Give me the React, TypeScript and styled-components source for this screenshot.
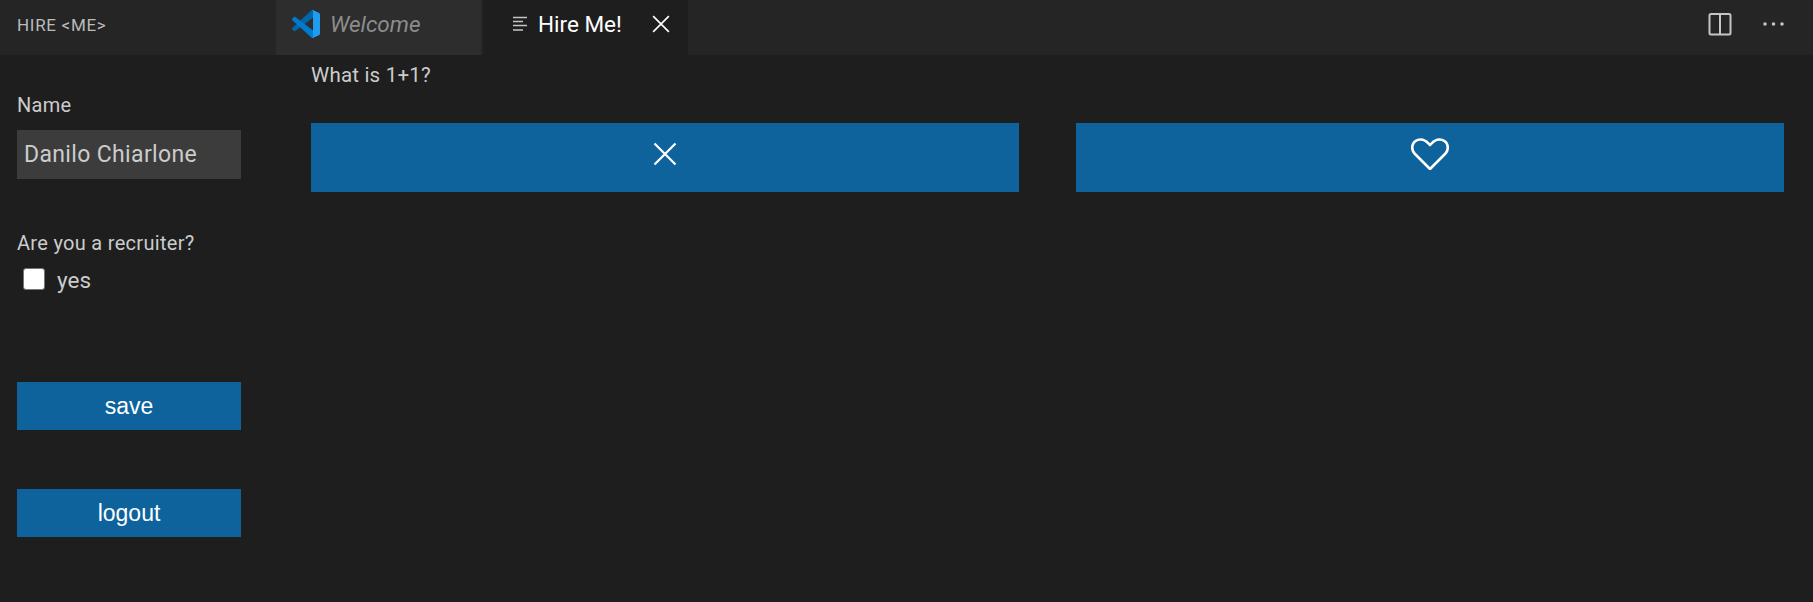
import React from "react";
import styled, { createGlobalStyle } from "styled-components";

const GlobalStyle = createGlobalStyle`
  html, body {
    margin: 0;
    padding: 0;
    background: #1e1e1e;
  }
  #root {
    height: 602px;
  }
`;

const uiFont = `Roboto, "Noto Sans", sans-serif`;

const Page = styled.div`
  display: flex;
  flex-direction: column;
  width: 1813px;
  height: 602px;
  overflow: hidden;
  background: #1e1e1e;
  color: #cccccc;
  font-family: ${uiFont};
`;

const TopBar = styled.div`
  display: flex;
  height: 55px;
  background: #252526;
`;

const PanelTitle = styled.div`
  width: 276px;
  padding: 15px 0 0 17px;
  box-sizing: border-box;
  font-size: 17px;
  line-height: 20px;
  letter-spacing: 0.7px;
  color: #bbbbbb;
`;

const Tab = styled.div<{ $active?: boolean }>`
  display: flex;
  align-items: center;
  width: 205px;
  height: 55px;
  box-sizing: border-box;
  padding-bottom: 8px;
  margin-right: 2px;
  background: ${(p) => (p.$active ? "#1e1e1e" : "#2d2d2d")};
`;

const WelcomeTab = styled(Tab)`
  padding-left: 16px;
`;

const HireTab = styled(Tab)`
  padding-left: 30px;
`;

const TabLabel = styled.span<{ $active?: boolean }>`
  font-size: 22.5px;
  line-height: 28px;
  font-style: ${(p) => (p.$active ? "normal" : "italic")};
  color: ${(p) => (p.$active ? "#ffffff" : "#8c8c8c")};
`;

const WelcomeLabel = styled(TabLabel)`
  margin-left: 10px;
`;

const HireLabel = styled(TabLabel)`
  margin-left: 10px;
`;

const TabClose = styled.span`
  display: flex;
  margin-left: 30px;
`;

const Actions = styled.div`
  display: flex;
  align-items: center;
  gap: 30px;
  margin-left: auto;
  padding: 0 29px 8px 0;
`;

const Body = styled.div`
  display: flex;
  flex: 1;
`;

const Sidebar = styled.form`
  display: flex;
  flex-direction: column;
  width: 311px;
  box-sizing: border-box;
  padding: 37px 0 0 17px;
`;

const FieldLabel = styled.label`
  font-size: 20px;
  line-height: 26px;
  letter-spacing: 0.3px;
  color: #cccccc;
`;

const NameInput = styled.input`
  width: 224px;
  height: 49px;
  box-sizing: border-box;
  margin-top: 12px;
  padding: 0 7px;
  border: 0;
  border-radius: 0;
  outline: 0;
  background: #3c3c3c;
  color: #cccccc;
  font-family: ${uiFont};
  font-size: 23px;
  letter-spacing: 0.35px;
`;

const RecruiterLabel = styled(FieldLabel)`
  margin-top: 51px;
`;

const CheckRow = styled.div`
  display: flex;
  align-items: center;
  margin: 9px 0 0 6px;
  height: 30px;
`;

const Check = styled.span`
  display: block;
  width: 20px;
  height: 20px;
  margin-bottom: 2px;
  border: 1px solid #767676;
  border-radius: 3px;
  background: #ffffff;
`;

const CheckText = styled.span`
  margin-left: 12px;
  font-size: 22.5px;
  color: #cccccc;
`;

const SideButton = styled.button`
  width: 224px;
  height: 48px;
  padding: 0;
  border: 0;
  border-radius: 0;
  background: #0e639c;
  color: #ffffff;
  font-family: "Liberation Sans", Arial, sans-serif;
  font-size: 23px;
`;

const SaveButton = styled(SideButton)`
  margin-top: 87px;
`;

const LogoutButton = styled(SideButton)`
  margin-top: 59px;
`;

const Main = styled.div`
  flex: 1;
  padding: 6px 29px 0 0;
`;

const Question = styled.div`
  font-size: 20.5px;
  line-height: 28px;
  letter-spacing: 0.2px;
  color: #cccccc;
`;

const Choices = styled.div`
  display: flex;
  gap: 57px;
  margin-top: 34px;
`;

const Choice = styled.button`
  display: flex;
  align-items: center;
  justify-content: center;
  width: 708px;
  height: 69px;
  padding: 0 0 7px;
  border: 0;
  border-radius: 0;
  background: #0e639c;
`;

const VsCodeLogo = () => (
  <svg width="28" height="28" viewBox="0 0 100 100">
    <path
      fill="#0065a9"
      d="M96.46 10.8 75.86.88C73.47-.27 70.62.21 68.75 2.08L1.3 63.58c-1.81 1.66-1.81 4.51 0 6.16l5.51 5.01c1.49 1.35 3.72 1.45 5.32.24L93.36 13.37C96.09 11.3 100 13.25 100 16.67v-.24c0-2.4-1.38-4.59-3.54-5.63Z"
    />
    <path
      fill="#007acc"
      d="M96.46 89.2 75.86 99.12c-2.39 1.15-5.24.67-7.11-1.2L1.3 36.42c-1.81-1.66-1.81-4.51 0-6.16l5.51-5.01c1.49-1.35 3.72-1.45 5.32-.24l81.23 61.62c2.73 2.07 6.64.12 6.64-3.3v.24c0 2.4-1.38 4.59-3.54 5.63Z"
    />
    <path
      fill="#1f9cf0"
      d="M75.86 99.13c-2.39 1.15-5.24.66-7.11-1.21 2.31 2.31 6.25.67 6.25-2.59V4.67c0-3.26-3.94-4.89-6.25-2.59 1.87-1.87 4.72-2.36 7.11-1.21l20.6 9.91C98.62 11.82 100 14.01 100 16.41v67.18c0 2.4-1.38 4.59-3.54 5.63Z"
    />
  </svg>
);

const PreviewIcon = () => (
  <svg width="15" height="16" viewBox="0 0 15 16" stroke="#c5c5c5" strokeWidth="1.6">
    <path d="M0 1.5h14M0 5.5h10M0 9.5h14M0 14h10" />
  </svg>
);

const CloseGlyph = ({ size }: { size: number }) => (
  <svg width={size} height={size} viewBox="0 0 24 24" stroke="#ffffff" strokeWidth="2.2">
    <path d="M1.5 1.5l21 21M22.5 1.5l-21 21" />
  </svg>
);

const HeartGlyph = () => (
  <svg
    width="38"
    height="32"
    viewBox="0 0 38 32"
    fill="none"
    stroke="#ffffff"
    strokeWidth="2.6"
    strokeLinejoin="round"
  >
    <path d="M19 31 3.5 15.5C0 11.5.8 5.5 4.5 3c4.5-3 10-1.5 14.5 4 4.5-5.5 10-7 14.5-4 3.7 2.5 4.5 8.5 1 12.5Z" />
  </svg>
);

const SplitIcon = () => (
  <svg width="24" height="24" viewBox="0 0 24 24" fill="none" stroke="#c5c5c5" strokeWidth="2">
    <rect x="1.5" y="2" width="21" height="20.5" rx="1.5" />
    <path d="M12 2v20.5" />
  </svg>
);

const MoreIcon = () => (
  <svg width="22" height="6" viewBox="0 0 22 6" fill="#c5c5c5">
    <circle cx="3" cy="3" r="1.8" />
    <circle cx="11.5" cy="3" r="1.8" />
    <circle cx="20" cy="3" r="1.8" />
  </svg>
);

export default function App() {
  return (
    <Page>
      <GlobalStyle />
      <TopBar>
        <PanelTitle>HIRE &lt;ME&gt;</PanelTitle>
        <WelcomeTab>
          <VsCodeLogo />
          <WelcomeLabel>Welcome</WelcomeLabel>
        </WelcomeTab>
        <HireTab $active>
          <PreviewIcon />
          <HireLabel $active>Hire Me!</HireLabel>
          <TabClose>
            <CloseGlyph size={18} />
          </TabClose>
        </HireTab>
        <Actions>
          <SplitIcon />
          <MoreIcon />
        </Actions>
      </TopBar>
      <Body>
        <Sidebar>
          <FieldLabel>Name</FieldLabel>
          <NameInput defaultValue="Danilo Chiarlone" />
          <RecruiterLabel>Are you a recruiter?</RecruiterLabel>
          <CheckRow>
            <Check />
            <CheckText>yes</CheckText>
          </CheckRow>
          <SaveButton type="button">save</SaveButton>
          <LogoutButton type="button">logout</LogoutButton>
        </Sidebar>
        <Main>
          <Question>What is 1+1?</Question>
          <Choices>
            <Choice type="button">
              <CloseGlyph size={24} />
            </Choice>
            <Choice type="button">
              <HeartGlyph />
            </Choice>
          </Choices>
        </Main>
      </Body>
    </Page>
  );
}
